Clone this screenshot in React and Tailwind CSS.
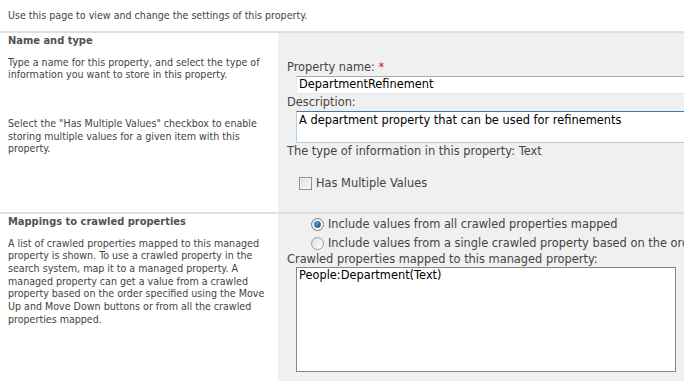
export default function App() {
  return (
    <div className="w-[684px] h-[381px] overflow-hidden bg-white text-[#444] font-['DejaVu_Sans_Condensed','DejaVu_Sans',sans-serif] text-[10.6px] leading-[12.67px]">
      <p className="px-2 pt-[9px] pb-[9px]">Use this page to view and change the settings of this property.</p>

      {/* Name and type */}
      <div className="flex border-t-2 border-[#dfdfdf] h-[181px]">
        <div className="w-[278px] shrink-0 pl-2 pr-2 pt-[1px]">
          <h3 className="font-bold text-[#525252] text-[11px] leading-[13px]">Name and type</h3>
          <p className="mt-[9px]">Type a name for this property, and select the type of information you want to store in this property.</p>
          <p className="mt-[36px]">Select the "Has Multiple Values" checkbox to enable storing multiple values for a given item with this property.</p>
        </div>
        <div className="flex-1 min-w-0 bg-[#f0f0f0] pl-[9px] pt-[28px] font-['DejaVu_Sans',sans-serif] text-[11.4px] leading-[13px] whitespace-nowrap overflow-hidden">
          <div>Property name: <span className="text-[#e3171d]">*</span></div>
          <div className="ml-[9px] mt-[2px] h-[18px] w-[420px] bg-white border border-[#e3e9ef] border-t-[#abadb3] pl-[2px] pt-[1px] text-black">DepartmentRefinement</div>
          <div className="mt-[2px]">Description:</div>
          <div className="ml-[9px] mt-[2px] h-[32px] w-[420px] bg-white border border-[#b5cfe7] border-t-[#3d7bad] pl-[2px] pt-[2px] text-black">A department property that can be used for refinements</div>
          <div className="mt-[2px]">The type of information in this property: Text</div>
          <div className="flex items-center ml-[12px] mt-[18px] gap-[4px] h-[15px]">
            <span className="shrink-0 w-[13px] h-[13px] border border-[#8f8f8f] bg-gradient-to-br from-[#dcdcdc] to-[#fafafa] shadow-[inset_0_0_0_1px_#f4f4f4]"></span>
            <span>Has Multiple Values</span>
          </div>
        </div>
      </div>

      {/* Mappings */}
      <div className="flex border-t-2 border-[#dfdfdf] h-[200px]">
        <div className="w-[278px] shrink-0 pl-2 pr-2 pt-[1px]">
          <h3 className="font-bold text-[#525252] text-[11px] leading-[13px]">Mappings to crawled properties</h3>
          <p className="mt-[9px]">A list of crawled properties mapped to this managed property is shown. To use a crawled property in the search system, map it to a managed property. A managed property can get a value from a crawled property based on the order specified using the Move Up and Move Down buttons or from all the crawled properties mapped.</p>
        </div>
        <div className="flex-1 min-w-0 bg-[#f0f0f0] pl-[9px] pt-[1px] font-['DejaVu_Sans',sans-serif] text-[11.4px] leading-[13px] whitespace-nowrap overflow-hidden">
          <div className="flex items-center ml-[24px] gap-[4px] h-[19px]">
            <span className="shrink-0 w-[13px] h-[13px] rounded-full border border-[#7a7a7a] bg-gradient-to-br from-[#e6e6e6] to-[#ffffff] flex items-center justify-center">
              <span className="w-[7px] h-[7px] rounded-full bg-gradient-to-br from-[#6fc3ee] to-[#0b4f86] border border-[#1b5d8f]"></span>
            </span>
            <span>Include values from all crawled properties mapped</span>
          </div>
          <div className="flex items-center ml-[24px] gap-[4px] h-[19px]">
            <span className="shrink-0 w-[13px] h-[13px] rounded-full border border-[#9a9a9a] bg-gradient-to-br from-[#e0e0e0] to-[#ffffff]"></span>
            <span>Include values from a single crawled property based on the order specified</span>
          </div>
          <div>Crawled properties mapped to this managed property:</div>
          <div className="ml-[9px] mt-[1px] h-[105px] w-[380px] bg-white border border-[#828790] pl-[2px] pt-[1px] text-black">People:Department(Text)</div>
        </div>
      </div>
    </div>
  )
}
